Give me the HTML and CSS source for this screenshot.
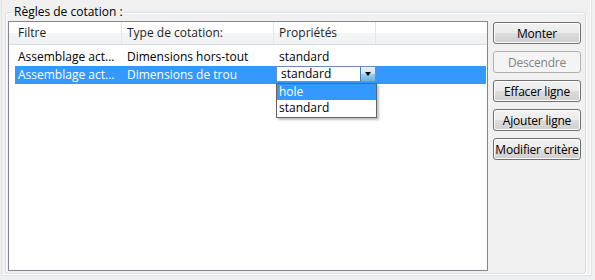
FILE: index.html
```html
<!DOCTYPE html>
<html lang="fr">
<head>
  <meta charset="utf-8">
  <title>Règles de cotation</title>
  <link rel="stylesheet" href="styles.css">
</head>
<body>
<div class="outer">
  <div class="group">
    <span class="legend">Règles de cotation :</span>
    <div class="list">
      <div class="head">
        <span class="c1">Filtre</span>
        <span class="c2">Type de cotation:</span>
        <span class="c3">Propriétés</span>
        <span class="c4"></span>
      </div>
      <div class="row">
        <span class="c1">Assemblage act...</span>
        <span class="c2">Dimensions hors-tout</span>
        <span class="c3">standard</span>
      </div>
      <div class="row sel">
        <span class="c1">Assemblage act...</span>
        <span class="c2">Dimensions de trou</span>
        <span class="c3 edit">
          <span class="combo">
            <span class="value">standard</span>
            <span class="arrow"></span>
          </span>
          <span class="popup">
            <span class="opt hi">hole</span>
            <span class="opt">standard</span>
          </span>
        </span>
      </div>
    </div>
    <div class="buttons">
      <button>Monter</button>
      <button disabled>Descendre</button>
      <button>Effacer ligne</button>
      <button>Ajouter ligne</button>
      <button>Modifier critère</button>
    </div>
  </div>
</div>
</body>
</html>
```

FILE: styles.css
```css
body {
  margin: 0;
  background: #f0f0f0;
  font-family: "Open Sans", "Noto Sans", sans-serif;
  font-size: 12px;
  color: #000;
}
.outer {
  margin: 0 3px 0 1px;
  height: 275px;
  border: 1px solid #dce3ea;
  border-top: none;
  box-shadow: inset -1px -1px 0 #fff;
  overflow: hidden;
}
.group {
  position: relative;
  display: flex;
  gap: 5px;
  margin: 12px 5px 0 3px;
  padding: 8px 2px 2px 2px;
  border: 1px solid #d5dfe5;
  border-radius: 3px;
  box-shadow: inset 1px 1px 0 #fff, 1px 1px 0 #fff;
}
.legend {
  position: absolute;
  top: -9px;
  left: 6px;
  padding: 0 2px;
  line-height: 16px;
  background: #f0f0f0;
}
.list {
  width: 478px;
  height: 248px;
  border: 1px solid #828790;
  background: #fff;
}
.head {
  display: flex;
  height: 22px;
  background: linear-gradient(#fff 0, #fff 50%, #f4f5f7 50%, #f0f1f3 100%);
  border-bottom: 1px solid #d8dadd;
  margin-bottom: 3px;
}
.head span {
  line-height: 22px;
  border-right: 1px solid #e3e5e7;
  box-sizing: border-box;
  color: #1e1e1e;
}
.head .c1 { width: 113px; padding-left: 9px; }
.head .c2 { width: 152px; padding-left: 5px; }
.head .c3 { width: 102px; padding-left: 5px; }
.head .c4 { flex: 1; border-right: none; }
.row {
  display: flex;
  height: 18px;
  line-height: 18px;
  margin: 0 1px 0 6px;
}
.row span { white-space: nowrap; box-sizing: border-box; }
.row .c1 { width: 107px; padding-left: 3px; }
.row .c2 { width: 151px; padding-left: 5px; }
.row .c3 { width: 102px; padding-left: 6px; }
.row.sel { background: #3399ff; color: #fff; }
.edit { position: relative; padding-left: 3px !important; }
.combo {
  display: flex;
  width: 100px;
  height: 16px;
  border: 1px solid #6d8db5;
  box-sizing: border-box;
  background: #fff;
  color: #000;
}
.combo .value { flex: 1; line-height: 14px; padding-left: 4px; }
.combo .arrow {
  width: 15px;
  background: linear-gradient(#e5f4fc, #c4e5f6 50%, #98d1ef 50%, #6fb3dd);
  border-left: 1px solid #3c7fb1;
  position: relative;
}
.combo .arrow::after {
  content: "";
  position: absolute;
  left: 4px;
  top: 5px;
  border-left: 3.5px solid transparent;
  border-right: 3.5px solid transparent;
  border-top: 4px solid #000;
}
.popup {
  position: absolute;
  left: 3px;
  top: 17px;
  width: 101px;
  box-sizing: border-box;
  border: 1px solid #646464;
  background: #fff;
  color: #000;
  box-shadow: 2px 2px 2px rgba(0, 0, 0, 0.25);
  display: flex;
  flex-direction: column;
  z-index: 1;
}
.opt { height: 16px; line-height: 16px; padding-left: 2px; }
.opt.hi { background: #3399ff; color: #fff; }
.opt + .opt { height: 17px; }
.buttons {
  display: flex;
  flex-direction: column;
  gap: 7px;
  margin-top: 1px;
}
.buttons button {
  width: 88px;
  height: 22px;
  font: inherit;
  letter-spacing: -0.2px;
  white-space: nowrap;
  color: #000;
  border: 1px solid #707070;
  border-radius: 3px;
  background: linear-gradient(#f2f2f2 0, #ebebeb 50%, #dddddd 50%, #cfcfcf 100%);
  box-shadow: inset 0 0 0 1px #fcfcfc;
  padding: 0;
}
.buttons button:disabled {
  color: #838383;
  border-color: #adb2b5;
  background: #f4f4f4;
  box-shadow: none;
}
```
